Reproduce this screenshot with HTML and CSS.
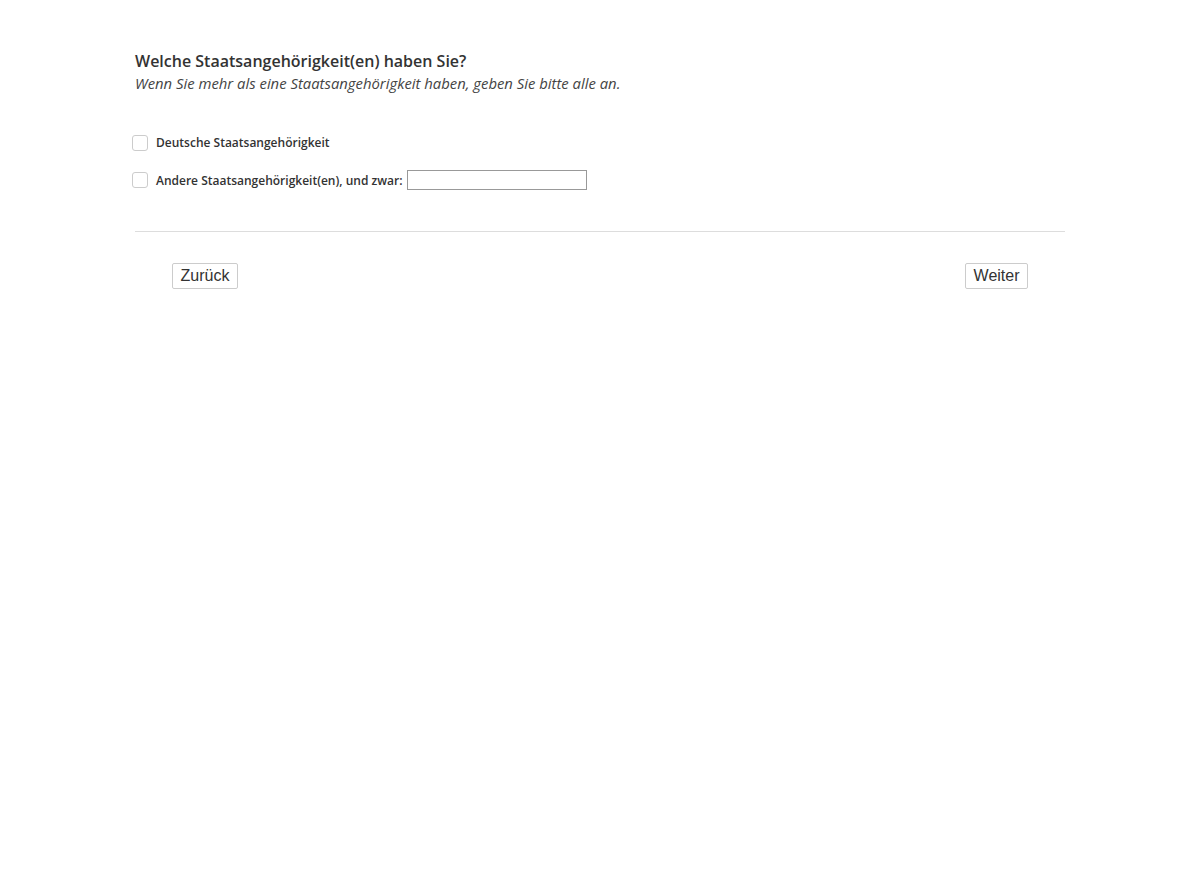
FILE: index.html
```html
<!DOCTYPE html>
<html lang="de">
<head>
    <meta charset="UTF-8">
    <title>Staatsangehörigkeit</title>
    <link rel="stylesheet" href="styles.css">
</head>
<body>
    <div class="container">
        <div class="question">
            <h2>Welche Staatsangehörigkeit(en) haben Sie?</h2>
            <p class="hint">Wenn Sie mehr als eine Staatsangehörigkeit haben, geben Sie bitte alle an.</p>
        </div>

        <div class="options">
            <label class="option">
                <input type="checkbox" class="box">
                <span>Deutsche Staatsangehörigkeit</span>
            </label>
            <label class="option">
                <input type="checkbox" class="box">
                <span>Andere Staatsangehörigkeit(en), und zwar:</span>
                <input type="text" class="other">
            </label>
        </div>

        <div class="nav">
            <button class="btn">Zurück</button>
            <button class="btn">Weiter</button>
        </div>
    </div>
</body>
</html>
```

FILE: styles.css
```css
body {
    margin: 0;
    background-color: #ffffff;
    color: #333333;
    font-family: "Open Sans", sans-serif;
}
.container {
    width: 930px;
    margin: 0 auto;
    padding-top: 51px;
}
.question h2 {
    margin: 0;
    font-size: 16px;
    font-weight: 600;
    line-height: 20px;
    color: #333333;
}
.question .hint {
    margin: 2px 0 0;
    font-size: 14.85px;
    font-style: italic;
    line-height: 20px;
    color: #444444;
}
.options {
    margin-top: 41px;
    display: flex;
    flex-direction: column;
    gap: 19px;
}
.option {
    display: flex;
    align-items: center;
    margin-left: -3px;
    font-size: 12px;
    font-weight: 600;
    color: #333333;
}
.box {
    appearance: none;
    width: 16px;
    height: 16px;
    margin: 0 8px 0 0;
    border: 1px solid #cccccc;
    border-radius: 3px;
    background-color: #ffffff;
}
.other {
    width: 180px;
    height: 20px;
    box-sizing: border-box;
    margin-left: 5px;
    border: 1px solid #999999;
    padding: 1px 4px;
}
.nav {
    margin-top: 41px;
    border-top: 1px solid #dddddd;
    padding: 31px 37px 0;
    display: flex;
    justify-content: space-between;
}
.btn {
    font-family: "Liberation Sans", Arial, sans-serif;
    font-size: 16px;
    color: #333333;
    background-color: #ffffff;
    border: 1px solid #cccccc;
    border-radius: 2px;
    height: 26px;
    padding: 0 7.5px;
}
```
